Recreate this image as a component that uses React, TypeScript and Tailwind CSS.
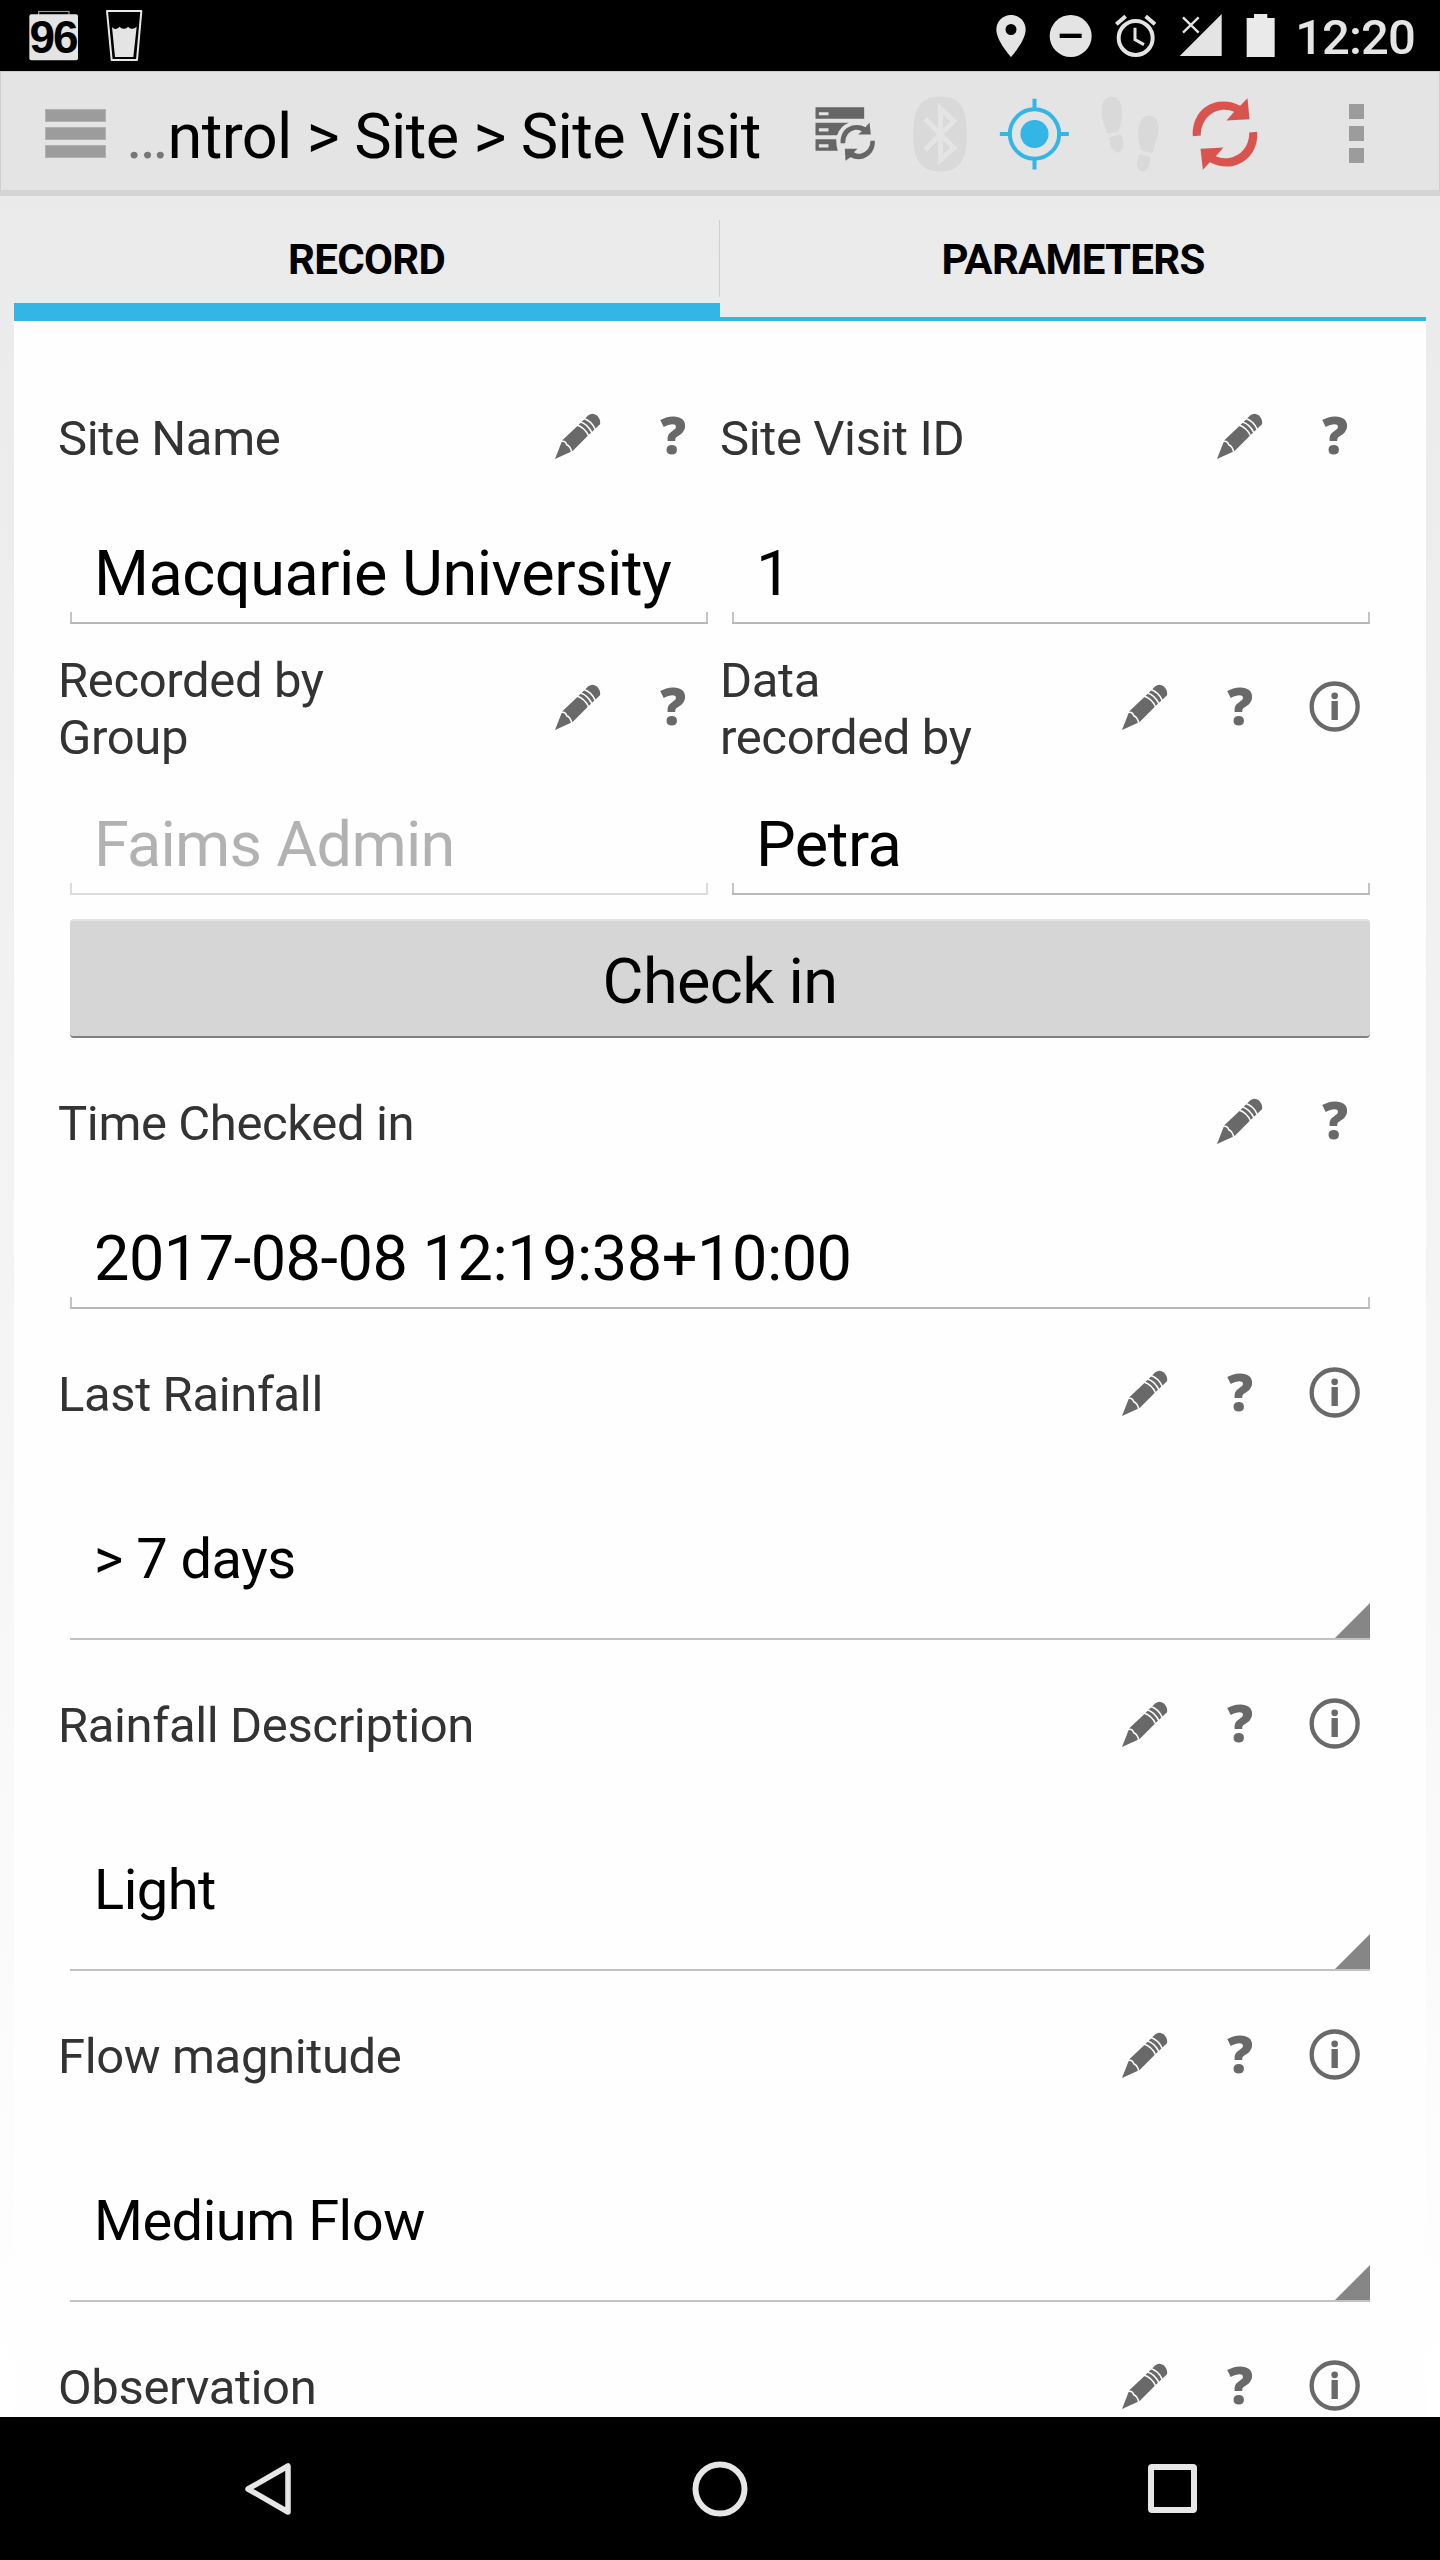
import React from "react";

type BoxProps = {
  x: number;
  y: number;
  w: number;
  h: number;
  label: string;
  children: React.ReactNode;
};

// Icon canvas drawn at three units per pixel.
function Icon({ x, y, w, h, label, children }: BoxProps) {
  return (
    <svg
      role="img"
      aria-label={label}
      className="block shrink-0"
      width={w / 3}
      height={h / 3}
      viewBox={`${x} ${y} ${w} ${h}`}
    >
      {children}
    </svg>
  );
}

function StatusBar() {
  return (
    <div className="flex h-[71px] shrink-0 items-start justify-between bg-black pr-[25px] pl-[28px]">
      <div className="flex items-start gap-[25px] pt-[9px]">
        <div className="relative">
          <Icon x={84} y={27} w={156} h={159} label="Calendar">
            <rect x="116" y="34.500" width="91" height="12" fill="none" stroke="#9a9a9a" strokeWidth="3.500" />
            <rect x="88" y="43" width="146" height="138" rx="6" fill="#e4e4e4" />
          </Icon>
          <span className="absolute top-[5px] left-0 w-[50px] text-center font-['Liberation_Sans'] text-[46px] leading-[46px] font-bold tracking-[-2px] text-black">
            96
          </span>
        </div>
        <Icon x={315} y={27} w={114} h={159} label="Water glass">
          <path d="M321 33H424L411 180H335Z" fill="none" stroke="#e8e8e8" strokeWidth="6" strokeLinejoin="round" />
          <path
            d="M336 81Q342 89 350 86Q356 84 358 80Q366 88 374 86Q382 84 384 80Q390 88 398 86Q406 85 410 80L400 171H345Z"
            fill="#e4e4e4"
          />
        </Icon>
      </div>
      <div className="flex items-start">
        <div className="flex items-start gap-[22px] pt-[13px] pr-[19px]">
          <Icon x={48} y={39} w={90} h={135} label="Location">
            <path
              fillRule="evenodd"
              fill="#e4e4e4"
              d="M93 45C68 45 49 65 49 89C49 122 93 171 93 171S137 122 137 89C137 65 118 45 93 45ZM93 72A16.500 16.500 0 1 1 93 105A16.500 16.500 0 1 1 93 72Z"
            />
          </Icon>
          <Icon x={208} y={39} w={132} h={135} label="Do not disturb">
            <circle cx="276" cy="108" r="63" fill="#e4e4e4" />
            <rect x="243" y="101" width="66" height="13" fill="#000" />
          </Icon>
          <Icon x={403} y={39} w={130} h={135} label="Alarm">
            <circle cx="468" cy="114" r="51" fill="none" stroke="#e4e4e4" strokeWidth="12" />
            <path d="M466 83V119L493 134" fill="none" stroke="#e4e4e4" strokeWidth="9" />
            <path d="M410 73L438 49M526 73L498 49" stroke="#e4e4e4" strokeWidth="12" />
          </Icon>
          <Icon x={595} y={39} w={132} h={135} label="No signal">
            <path d="M723 42V168H597Z" fill="#e4e4e4" />
            <path d="M607 52L654 98M654 52L607 98" stroke="#e4e4e4" strokeWidth="7" />
          </Icon>
          <Icon x={793} y={39} w={94} h={135} label="Battery">
            <path d="M820 42H860V54H882V171H798V54H820Z" fill="#eaeaea" />
          </Icon>
        </div>
        <span className="mt-[9px] text-[49px] leading-[57px] font-medium tracking-[-0.9px] text-[#e5e5e5]">12:20</span>
      </div>
    </div>
  );
}

function ToolCell({ children }: { children: React.ReactNode }) {
  return <div className="flex w-[95px] shrink-0 justify-center pt-[21.500px]">{children}</div>;
}

function ActionBar() {
  return (
    <div className="flex h-[125px] shrink-0 border-t border-b-[6px] border-t-[#d0cbd0] border-b-[#d4d4d4] bg-[#e4e4e4]">
      <div className="flex w-[797px] shrink-0 border-l border-[#cfcfcf]">
        <div className="mt-[37px] ml-[44px] flex w-[61px] flex-col gap-[5px]">
          <div className="h-[13px] border border-[#b0b0b0] bg-[#9c9c9c]" />
          <div className="h-[13px] border border-[#b0b0b0] bg-[#9c9c9c]" />
          <div className="h-[13px] border border-[#b0b0b0] bg-[#9c9c9c]" />
        </div>
        <div className="mt-[28px] ml-[20px] text-[63px] leading-[74px] tracking-[-0.62px] whitespace-nowrap text-black">
          <span className="text-[#777]">…</span>ntrol &gt; Site &gt; Site Visit
        </div>
      </div>
      <ToolCell>
        <Icon x={46.5} y={40.5} w={240} h={240} label="Sync database">
          <g fill="#666">
            <path fillRule="evenodd" d="M78 80H224V115H78ZM88 95V104H117V95Z" />
            <path fillRule="evenodd" d="M78 127H178Q152 137 143 164H78ZM88 143V153H117V143Z" />
            <path fillRule="evenodd" d="M78 176H140Q140 196 145 211H78ZM88 191V201H117V191Z" />
            <path d="M240 126L244 162H206L217 152Q208 146 197 148Q166 156 167 188H153Q152 147 188 135Q210 130 228 140Z" />
            <path d="M168 241L166 205H204L193 215Q204 222 215 219Q243 210 243 181H256Q257 220 222 234Q201 240 183 230Z" />
          </g>
        </Icon>
      </ToolCell>
      <ToolCell>
        <Icon x={331.5} y={40.5} w={240} h={240} label="Bluetooth">
          <path
            d="M452 48C508 48 532 78 532 160S508 273 452 273S371 242 371 160S396 48 452 48Z"
            fill="#d9d9d9"
          />
          <path
            d="M407 115L493 202L453 238V84L493 122L407 208"
            fill="none"
            stroke="#e4e4e4"
            strokeWidth="15"
          />
        </Icon>
      </ToolCell>
      <ToolCell>
        <Icon x={46.5} y={280.5} w={240} h={240} label="GPS">
          <g fill="none" stroke="#33b5e5" strokeWidth="12">
            <circle cx="165" cy="400.500" r="74" />
            <path d="M165 295V327M165 474V507M61 400.500H91M239 400.500H268" />
          </g>
          <circle cx="165" cy="400.500" r="42" fill="#33b5e5" />
        </Icon>
      </ToolCell>
      <ToolCell>
        <Icon x={331.5} y={280.5} w={240} h={240} label="Tracking">
          <g fill="#d9d9d9">
            <path d="M396 289C422 289 431 322 427 350C425 368 419 380 417 392L383 400C377 376 366 358 366 328C366 305 377 289 396 289Z" />
            <path d="M389 411L424 401C432 418 436 438 427 450C419 459 406 457 400 448C394 440 392 428 389 411Z" />
            <path d="M509 346C530 346 539 366 537 388C535 415 524 432 519 458L484 449C481 430 474 420 476 393C478 365 489 346 509 346Z" />
            <path d="M480 461L514 471C512 490 508 502 501 509C493 515 480 513 475 505C468 493 474 477 480 461Z" />
          </g>
        </Icon>
      </ToolCell>
      <ToolCell>
        <Icon x={616.5} y={280.5} w={240} h={240} label="Synchronise">
          <g fill="#d9534f">
            <path d="M804 293L810 356L741 360L764 334Q748 326 728 328C690 333 664 364 664 405L640 407C637 355 667 313 716 304Q752 299 782 316Z" />
            <path d="M670 508L663 445L732 441L709 467Q725 475 745 473C784 468 810 437 809 396L833 394C837 446 806 488 757 497Q721 501 691 485Z" />
          </g>
        </Icon>
      </ToolCell>
      <div className="flex flex-1 flex-col items-center gap-[7px] border-r border-[#cfcfcf] pt-[32px] pl-[2px]">
        <div className="size-[15px] bg-[#9c9c9c]" />
        <div className="size-[15px] bg-[#9c9c9c]" />
        <div className="size-[15px] bg-[#9c9c9c]" />
      </div>
    </div>
  );
}

function Tabs() {
  return (
    <div className="flex h-[125px] shrink-0 px-[14px] text-center text-[42px] leading-[50px] font-bold tracking-[-0.7px] text-black">
      <div className="flex flex-1 flex-col border-b-[18px] border-[#33b5e5]">
        <div className="mt-[24px] h-[77px] border-r border-[#cfcfcf] pt-[15px]">RECORD</div>
      </div>
      <div className="flex-1 border-b-4 border-[#33b5e5] pt-[39px]">PARAMETERS</div>
    </div>
  );
}

function IconCell({ children }: { children: React.ReactNode }) {
  return <div className="flex h-[114px] w-[95px] shrink-0 items-center justify-center">{children}</div>;
}

function Pencil() {
  return (
    <Icon x={66} y={69} w={138} h={138} label="Annotate">
      <path
        d="M66 207L88 151L134 107L166 76Q178 67 191 76Q204 88 201 103L166 136L119 183L66 207Z"
        fill="#696969"
      />
      <g fill="none" stroke="#fefefe" strokeWidth="4.500">
        <path d="M84 154Q98 151 101 164Q113 168 117 189" />
        <path d="M131 105Q155 112 167 138" />
        <path d="M141 95Q165 102 177 129" />
        <path d="M151 85Q176 93 187 119" />
      </g>
    </Icon>
  );
}

function Info() {
  return (
    <Icon x={627} y={63} w={154} h={154} label="Info">
      <circle cx="704" cy="139.500" r="69" fill="none" stroke="#696969" strokeWidth="13" />
      <circle cx="704" cy="107.500" r="10" fill="#696969" />
      <rect x="694.500" y="123" width="19" height="57" fill="#696969" />
    </Icon>
  );
}

function LabelRow({ text, info }: { text: string; info?: boolean }) {
  return (
    <div className="flex h-[114px] items-center">
      <div
        className={`flex-1 text-[49px] leading-[57px] tracking-[-0.38px] whitespace-pre-line text-[#333] ${info ? "pt-[3px]" : "pt-[4px]"}`}
      >
        {text}
      </div>
      <IconCell>
        <Pencil />
      </IconCell>
      <IconCell>
        <span className="pb-[4px] pl-px font-['Open_Sans'] text-[51px] leading-[54px] font-extrabold text-[#696969]">
          ?
        </span>
      </IconCell>
      {info && (
        <IconCell>
          <Info />
        </IconCell>
      )}
    </div>
  );
}

function TextField({ value, disabled }: { value: string; disabled?: boolean }) {
  const tone = disabled ? "border-[#dcdcdc]" : "border-[#b8b8b8]";
  const tick = disabled ? "bg-[#dcdcdc]" : "bg-[#c4c4c4]";
  return (
    <div className={`mx-[12px] flex h-[131px] flex-col justify-between border-b-2 ${tone}`}>
      <div
        className={`pt-[44px] pl-[24px] text-[63px] leading-[74px] whitespace-nowrap ${disabled ? "tracking-[-0.75px] text-[#b2b2b2]" : "tracking-[-0.47px] text-black"}`}
      >
        {value}
      </div>
      <div className="flex justify-between">
        <div className={`h-[10px] w-[2px] ${tick}`} />
        <div className={`h-[10px] w-[2px] ${tick}`} />
      </div>
    </div>
  );
}

function Field({ label, value, info, disabled }: { label: string; value: string; info?: boolean; disabled?: boolean }) {
  return (
    <div className="w-full">
      <LabelRow text={label} info={info} />
      <TextField value={value} disabled={disabled} />
    </div>
  );
}

function Spinner({ label, value }: { label: string; value: string }) {
  return (
    <div className="mt-[27px]">
      <LabelRow text={label} info />
      <div className="mx-[12px] flex h-[190px] items-end justify-between border-b-2 border-[#c2c2c2]">
        <div className="self-start pt-[76px] pl-[24px] text-[56px] leading-[66px] tracking-[-0.5px] text-black">
          {value}
        </div>
        <svg aria-hidden="true" className="block size-[35px]" viewBox="0 0 35 35">
          <path d="M35 0V35H0Z" fill="#868686" />
        </svg>
      </div>
    </div>
  );
}

const spinners = [
  { label: "Last Rainfall", value: "> 7 days" },
  { label: "Rainfall Description", value: "Light" },
  { label: "Flow magnitude", value: "Medium Flow" },
];

function NavBar() {
  return (
    <div className="flex h-[143px] shrink-0 items-center bg-black px-[42px]">
      <div className="flex flex-1 justify-center">
        <svg aria-label="Back" className="block h-[56px] w-[48px]" viewBox="0 0 48 56">
          <path d="M44 5V51L4 28Z" fill="none" stroke="#e6e6e6" strokeWidth="5.500" strokeLinejoin="round" />
        </svg>
      </div>
      <div className="flex flex-1 justify-center">
        <svg aria-label="Home" className="block size-[56px]" viewBox="0 0 56 56">
          <circle cx="28" cy="28" r="24.500" fill="none" stroke="#e6e6e6" strokeWidth="6" />
        </svg>
      </div>
      <div className="flex flex-1 justify-center">
        <div className="size-[49px] rounded-[4px] border-[6px] border-[#e6e6e6]" />
      </div>
    </div>
  );
}

export default function App() {
  return (
    <div className="flex h-[2560px] w-[1440px] flex-col overflow-hidden bg-white font-['Roboto',sans-serif]">
      <StatusBar />
      <ActionBar />
      <div className="flex min-h-0 flex-1 flex-col bg-linear-to-b from-[#eaeaea] to-white">
        <Tabs />
        <div className="mx-[14px] min-h-0 flex-1 overflow-hidden bg-[#fefefe] px-[44px] pt-[58px]">
          <div className="grid grid-cols-2 gap-y-[26px]">
            <Field label="Site Name" value="Macquarie University" />
            <Field label="Site Visit ID" value="1" />
            <Field label={"Recorded by\nGroup"} value="Faims Admin" disabled />
            <Field label={"Data\nrecorded by"} value="Petra" info />
          </div>
          <button className="mx-[12px] mt-[24px] flex h-[119px] w-[1300px] items-center justify-center rounded-[4px] border-t-2 border-b-2 border-t-[#e2e2e2] border-b-[#808080] bg-[#d6d6d6] pt-[6px] text-[63px] leading-[74px] tracking-[-0.6px] text-black">
            Check in
          </button>
          <div className="mt-[26px]">
            <Field label="Time Checked in" value="2017-08-08 12:19:38+10:00" />
          </div>
          {spinners.map((s) => (
            <Spinner key={s.label} label={s.label} value={s.value} />
          ))}
          <div className="mt-[27px]">
            <LabelRow text="Observation" info />
          </div>
        </div>
      </div>
      <NavBar />
    </div>
  );
}
